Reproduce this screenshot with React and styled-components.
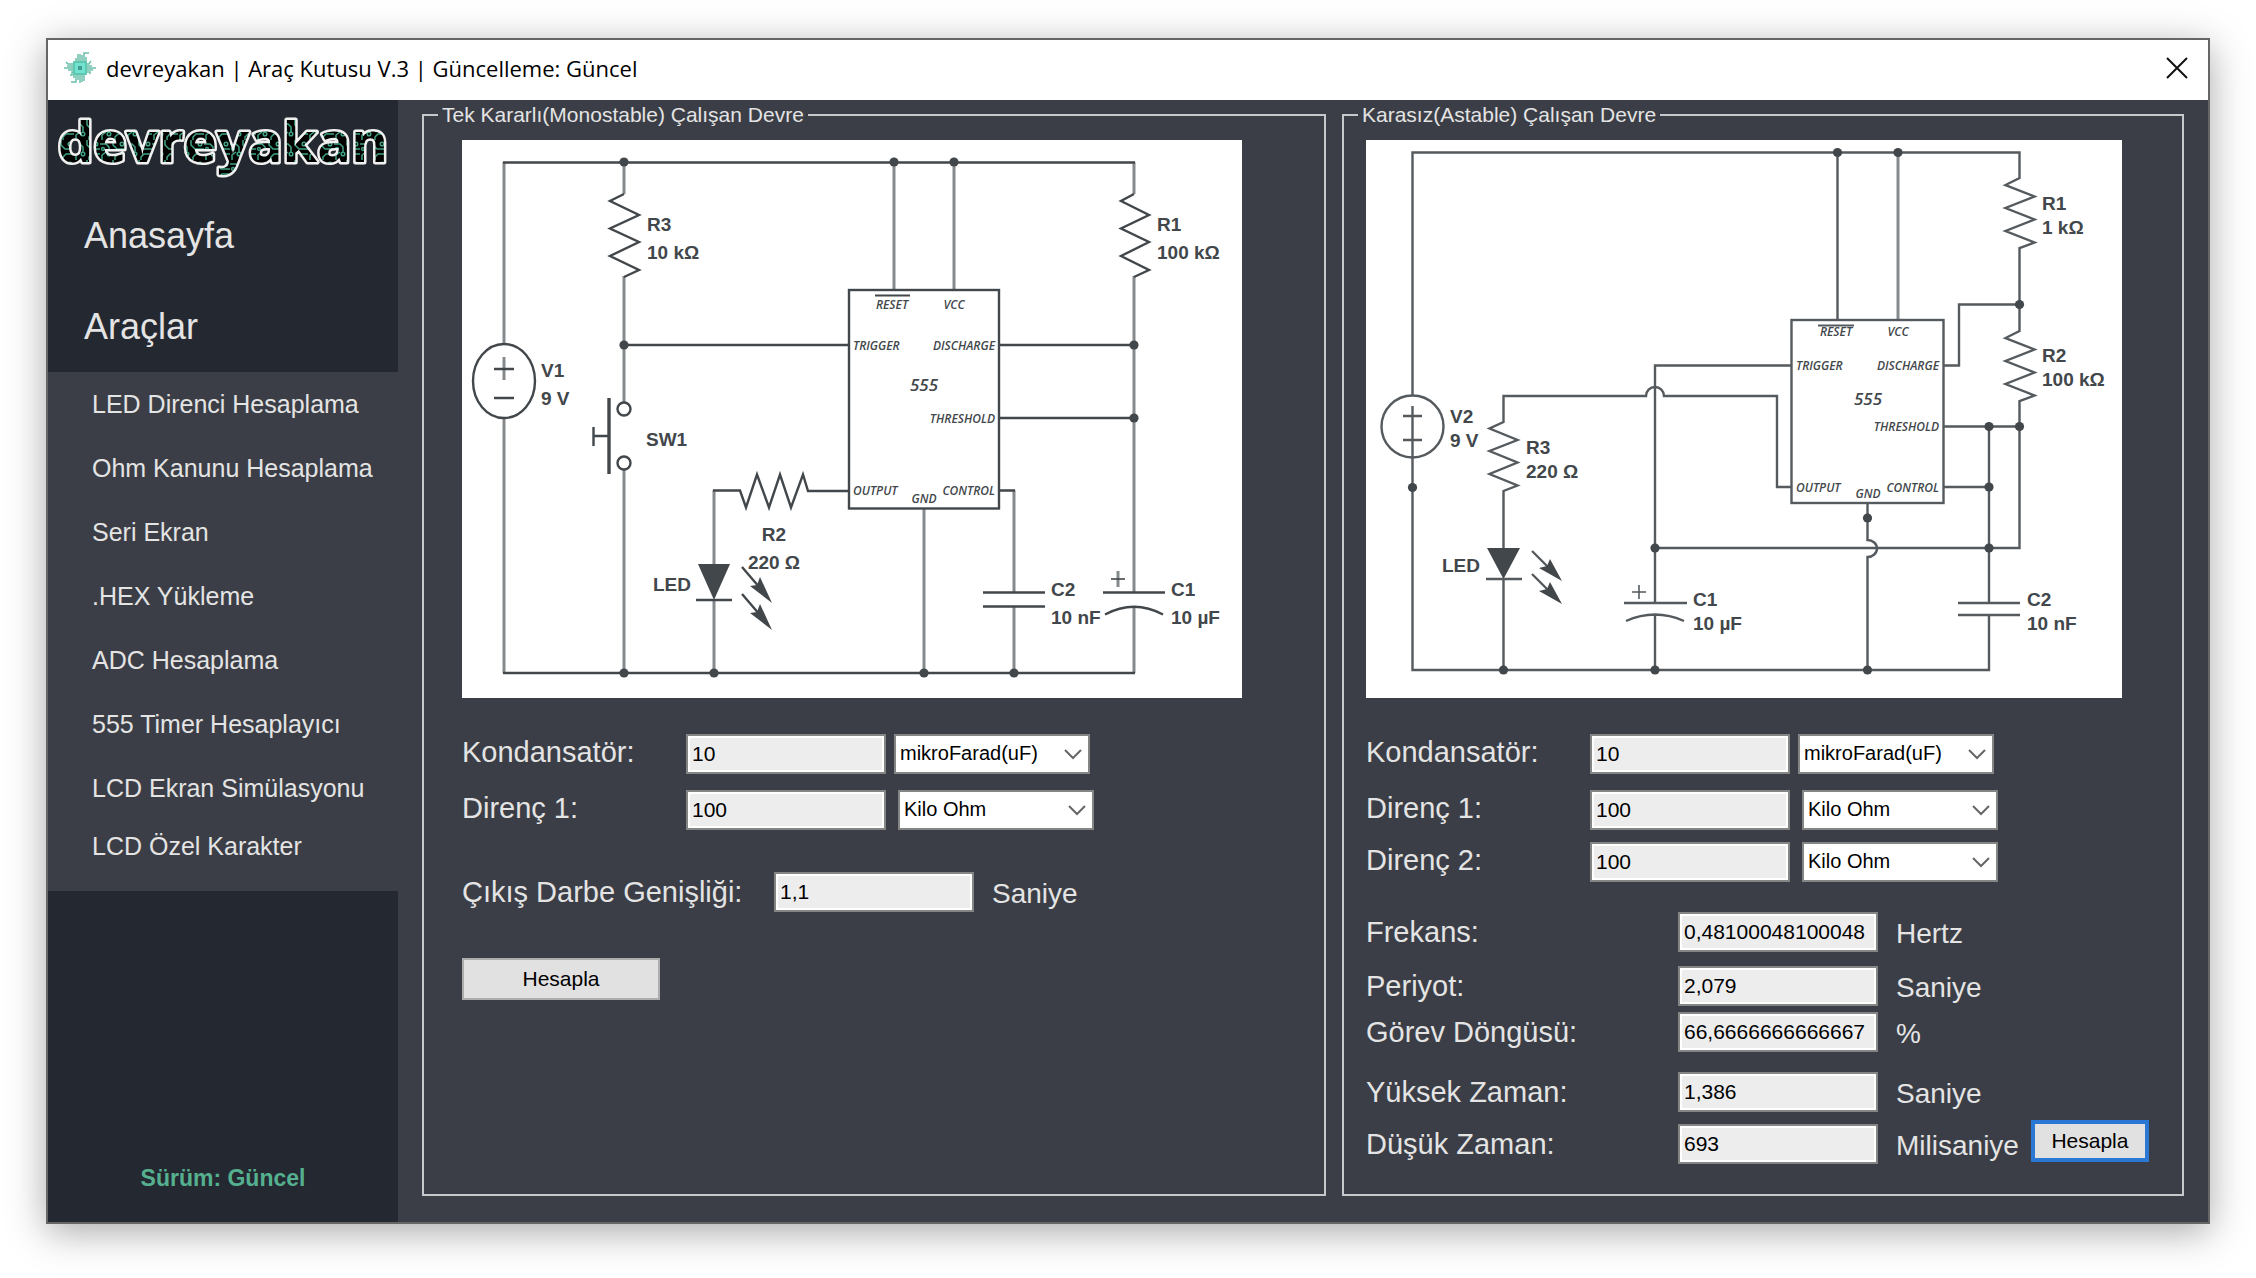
import React from "react";
import styled, { createGlobalStyle, css } from "styled-components";

const color = {
  frame: "#666666",
  surface: "#3b3e46",
  side: "#242830",
  text: "#e4e4e4",
  line: "#c6c8cc",
  accent: "#55b08f",
  wire: "#555a5e",
  soft: "#858a8c",
  ink: "#42474b",
};

const GlobalStyle = createGlobalStyle`
  *, *::before, *::after { box-sizing: border-box; }
  body {
    margin: 0;
    background: #ffffff;
    font-family: "Liberation Sans", Arial, sans-serif;
  }
`;

const Page = styled.div`
  padding: 38px 46px 54px;
`;

const AppWindow = styled.div`
  border: 2px solid ${color.frame};
  background: ${color.surface};
  box-shadow: 0 8px 36px rgba(0, 0, 0, 0.34);
`;

const TitleBar = styled.header`
  display: flex;
  align-items: center;
  gap: 10px;
  height: 60px;
  padding: 0 20px 4px 16px;
  background: #ffffff;
`;

const Title = styled.h1`
  flex: 1;
  margin: 0;
  font: 400 22px/30px "Open Sans", "Noto Sans", sans-serif;
  color: #000000;
`;

const CloseButton = styled.button`
  display: grid;
  place-items: center;
  padding: 0;
  border: 0;
  background: none;
`;

const Body = styled.div`
  display: flex;
`;

const Sidebar = styled.aside`
  display: flex;
  flex-direction: column;
  flex: 0 0 350px;
  background: ${color.side};
`;

const Logo = styled.svg`
  display: block;
  width: 100%;
  height: 90px;
`;

const MainLink = styled.a`
  display: flex;
  align-items: center;
  height: 91px;
  padding-left: 36px;
  font-size: 36px;
  color: ${color.text};
  text-decoration: none;
`;

const ToolMenu = styled.nav`
  display: flex;
  flex-direction: column;
  padding-bottom: 19px;
  background: ${color.surface};
`;

const ToolLink = styled.a`
  display: flex;
  align-items: center;
  height: 64px;
  padding-left: 44px;
  font-size: 25px;
  color: ${color.text};
  text-decoration: none;

  &:last-child {
    height: 52px;
  }
`;

const Version = styled.p`
  margin: auto 0 0;
  padding-bottom: 30px;
  font-size: 23px;
  line-height: 28px;
  font-weight: 700;
  text-align: center;
  color: ${color.accent};
`;

const Content = styled.main`
  display: grid;
  grid-template-columns: minmax(0, 904fr) minmax(0, 842fr);
  flex: 1;
  gap: 16px;
  min-width: 0;
  padding: 3px 24px 26px;
`;

const Group = styled.fieldset`
  min-width: 0;
  margin: 0;
  padding: 13px 22px 30px ${(p) => p.$indent}px;
  border: 2px solid ${color.line};
`;

const Legend = styled.legend`
  margin-left: ${(p) => p.$shift}px;
  padding: 0 4px;
  font-size: 21px;
  line-height: 24px;
  color: ${color.text};
`;

const Circuit = styled.svg`
  display: block;
  max-width: 100%;
  margin-bottom: 36px;
  background: #ffffff;
  font: 700 19px "Liberation Sans", Arial, sans-serif;
  fill: ${color.ink};
`;

const Row = styled.div`
  display: flex;
  align-items: center;
  height: 40px;
  margin-bottom: ${(p) => p.$after || 0}px;
`;

const Label = styled.label`
  flex: 0 0 ${(p) => p.$width}px;
  padding-bottom: ${(p) => (p.$raised ? 4 : 0)}px;
  font-size: 29px;
  line-height: 32px;
  white-space: nowrap;
  color: ${color.text};
`;

const Unit = styled.span`
  padding: 4px 0 0 18px;
  font-size: 28px;
  line-height: 32px;
  color: ${color.text};
`;

const Field = styled.input`
  flex: 0 0 200px;
  width: 200px;
  height: 40px;
  padding: 0 4px;
  border: 2px solid #858585;
  box-shadow: inset 0 0 0 2px #ffffff;
  background: #ededed;
  font: 21px "Liberation Sans", Arial, sans-serif;
  color: #000000;
`;

const SelectBox = styled.span`
  position: relative;
  flex: 0 0 196px;
  height: 40px;
  margin-left: ${(p) => p.$gap}px;

  svg {
    position: absolute;
    top: 14px;
    right: 8px;
    pointer-events: none;
  }
`;

const Select = styled.select`
  appearance: none;
  width: 100%;
  height: 40px;
  padding: 0 30px 2px 4px;
  border: 2px solid #858585;
  border-radius: 0;
  background: #ffffff;
  font: 20px "Liberation Sans", Arial, sans-serif;
  color: #000000;
`;

const Button = styled.button`
  width: ${(p) => p.$width}px;
  height: 42px;
  padding: 0;
  border: 2px solid #adadad;
  background: #e1e1e1;
  font: 21px "Liberation Sans", Arial, sans-serif;
  color: #000000;

  ${(p) =>
    p.$active &&
    css`
      margin: 0 0 6px 12px;
      border: 4px solid #2a78d4;
    `}
`;

function AppIcon() {
  return (
    <svg width="32" height="32" viewBox="0 0 32 32" aria-hidden="true">
      <g fill="none" stroke="#6cc0ab" strokeWidth="1.5">
        <path d="M12 10V6M14 10V2M16 10V2M18 10V3M20 10V1H25M22 10V5" />
        <path d="M12 22v8H7M14 22v6M16 22v9M18 22v8M20 22v7M10 22v4" />
        <path d="M10 12H4L2 10M10 14H3M10 16H0M10 18H4M10 20H8V23H6" />
        <path d="M22 12h3l2-3M22 14h6M22 16h10M22 18h7M22 20h4v2" />
      </g>
      <rect x="9" y="9" width="14" height="14" rx="1" fill="#5cc8b0" />
      <rect x="11" y="11" width="10" height="10" fill="#74e2d2" />
      <rect x="14" y="14" width="4" height="4" fill="#3f9f8c" />
    </svg>
  );
}

function BrandLogo() {
  return (
    <Logo viewBox="0 0 350 90" role="img" aria-label="devreyakan">
      <defs>
        <pattern id="traces" width="26" height="20" patternUnits="userSpaceOnUse">
          <rect width="26" height="20" fill="#000" />
          <g fill="none" stroke="#3fa184" strokeWidth="1.5">
            <path d="M0 4h6l3 3v5M13 0v5l4 4h9M26 14h-8l-3 3v3M2 20v-5l4-3" />
            <circle cx="9" cy="14" r="1.8" />
            <circle cx="22" cy="4" r="1.8" />
            <circle cx="3" cy="9" r="1.4" />
          </g>
        </pattern>
      </defs>
      <text
        x="175"
        y="62"
        textAnchor="middle"
        fontFamily="Open Sans, Noto Sans, sans-serif"
        fontWeight="700"
        fontSize="56"
        fill="url(#traces)"
        stroke="#f0f0f0"
        strokeWidth="5"
        strokeLinejoin="round"
        paintOrder="stroke"
      >
        devreyakan
      </text>
    </Logo>
  );
}

function Dots({ at }) {
  return at.map(([x, y]) => <circle key={`${x}-${y}`} cx={x} cy={y} r="4.6" />);
}

/* Two stacked lines: part name and value. */
function Part({ x, y, step, lines, anchor }) {
  return lines.map((line, i) => (
    <text key={line} x={x} y={y + i * step} textAnchor={anchor}>
      {line}
    </text>
  ));
}

function Pins({ pins }) {
  return (
    <g fontFamily="Open Sans, Noto Sans, sans-serif" fontStyle="italic" fontWeight="600" fontSize="12">
      {pins.map(([name, x, y, anchor, size]) => (
        <text key={name} x={x} y={y} textAnchor={anchor} fontSize={size}>
          {name}
        </text>
      ))}
    </g>
  );
}

function MonostableCircuit() {
  return (
    <Circuit width="780" height="558" viewBox="0 0 780 558" role="img" aria-label="Monostable 555">
      <g fill="none" stroke={color.soft} strokeWidth="3">
        <path d="M42 22V205M42 278V533M162 22V54M162 136V262M162 330V533M252 350V424M252 460V533" />
        <path d="M432 22V150M492 22V150M672 22V54M672 136V452M672 467V533M462 369V533M552 350V452M552 467V533" />
        <path d="M42 217V240" />
        <path d="M656 431V447" />
      </g>
      <g fill="none" stroke={color.ink} strokeWidth="2.4">
        <path d="M41 22.500H673M41 533H673M162 205H387M538 205H672M538 278H672" />
        <path d="M162 54l-14 7 29 14-29 13.500 29 13.500-29 14 29 14-15 7" />
        <path d="M672 54l-13 7 28 14-28 13.500 28 13.500-28 14 28 14-15 7" />
        <ellipse cx="42" cy="241" rx="31" ry="37" />
        <path d="M32 229H52M32 258H52" />
        <circle cx="162" cy="269" r="6.500" />
        <circle cx="162" cy="323" r="6.500" />
        <path d="M131.500 287V306M131.500 296H147" />
        <path d="M147 258V334" strokeWidth="3.400" />
        <path d="M251 350.500H278l6 17 11-33 12 33 11-33 11 33 12-33 5 16.500H387" />
        <path d="M234 460H270M280 427L298 448M280 454L298 475" />
        <rect x="387" y="150" width="150" height="218.500" />
        <path d="M538 350.500H553M521 452.500H583M521 466.500H583M641 452.500H703M643 474.500Q672 459 701 474.500" />
        <path d="M413 155.500H448" strokeWidth="1.800" />
        <path d="M649 439H663" strokeWidth="1.600" />
      </g>
      <path d="M236 424H268L252 460ZM310 463L288 446 295 445 298 437ZM310 490L288 473 295 472 298 464Z" />
      <Dots at={[[162, 22], [162, 205], [162, 533], [252, 533], [432, 22], [492, 22], [462, 533], [552, 533], [672, 205], [672, 278]]} />
      <Part x={185} y={91} step={28} lines={["R3", "10 kΩ"]} />
      <Part x={695} y={91} step={28} lines={["R1", "100 kΩ"]} />
      <Part x={79} y={237} step={28} lines={["V1", "9 V"]} />
      <Part x={184} y={306} step={28} lines={["SW1"]} />
      <Part x={312} y={401} step={28} lines={["R2", "220 Ω"]} anchor="middle" />
      <Part x={191} y={451} step={28} lines={["LED"]} />
      <Part x={589} y={456} step={28} lines={["C2", "10 nF"]} />
      <Part x={709} y={456} step={28} lines={["C1", "10 µF"]} />
      <Pins
        pins={[
          ["RESET", 430, 169, "middle"],
          ["VCC", 492, 169, "middle"],
          ["TRIGGER", 391, 210],
          ["DISCHARGE", 533, 210, "end"],
          ["555", 462, 251, "middle", 17],
          ["THRESHOLD", 533, 283, "end"],
          ["OUTPUT", 391, 355],
          ["GND", 462, 363, "middle"],
          ["CONTROL", 533, 355, "end"],
        ]}
      />
    </Circuit>
  );
}

function AstableCircuit() {
  return (
    <Circuit width="756" height="558" viewBox="0 0 756 558" role="img" aria-label="Astable 555">
      <g fill="none" stroke={color.wire} strokeWidth="2.4">
        <path d="M46.500 256V12.500H653.500V38l-14 7 29 11.500-29 11.500 29 11.500-29 11.500 29 11.500-15 5.500V191l-14 7 29 11.500-29 11.500 29 11.500-29 11.500 29 11.500-15 5.500V408H289" />
        <path d="M46.500 266V530H623V475M623 463V286.500M577 286.500H653M577 347H623" />
        <circle cx="46.500" cy="286.500" r="31" />
        <path d="M37 276H56M37 300H56" />
        <path d="M425 347H411V256H298A9 9 0 0 0 280 256H137.500V282l-14 6.500 28 11.500-28 11 28 11.500-28 11.500 28 11.500-14 5.500V408M137.500 439V530" />
        <path d="M120 439H156M166 411L186 431M166 434L186 454" />
        <path d="M425 225.500H289V463M289 475V530M258 463H321M260 481Q289 468 318 481" />
        <path d="M471.500 12V180M577 225.500H593V164.500H653" />
        <path d="M532 12V180" stroke={color.soft} strokeWidth="3" />
        <rect x="425.500" y="180" width="152" height="183" />
        <path d="M501.500 363V400A9.500 8.500 0 0 1 501.500 417V530" />
        <path d="M592 463H654M592 475H654" />
        <path d="M452 185.500H488" strokeWidth="1.800" />
        <path d="M266 452H280M273 445V459" strokeWidth="1.600" />
      </g>
      <path d="M121 408H154L137.500 439ZM196 441L173 428 181 426 184 419ZM196 464L173 451 181 449 184 442Z" />
      <Dots
        at={[
          [46.5, 347.5], [137.5, 530], [289, 408], [289, 530], [471.5, 12.5], [532, 12.5], [653.5, 164.5],
          [653.5, 286.5], [623, 286.5], [623, 347], [623, 408], [501.5, 378], [501.5, 530],
        ]}
      />
      <Part x={676} y={70} step={24} lines={["R1", "1 kΩ"]} />
      <Part x={676} y={222} step={24} lines={["R2", "100 kΩ"]} />
      <Part x={84} y={283} step={24} lines={["V2", "9 V"]} />
      <Part x={160} y={314} step={24} lines={["R3", "220 Ω"]} />
      <Part x={76} y={432} step={24} lines={["LED"]} />
      <Part x={327} y={466} step={24} lines={["C1", "10 µF"]} />
      <Part x={661} y={466} step={24} lines={["C2", "10 nF"]} />
      <Pins
        pins={[
          ["RESET", 470, 196, "middle"],
          ["VCC", 532, 196, "middle"],
          ["TRIGGER", 430, 230],
          ["DISCHARGE", 573, 230, "end"],
          ["555", 502, 265, "middle", 17],
          ["THRESHOLD", 573, 291, "end"],
          ["OUTPUT", 430, 352],
          ["GND", 502, 358, "middle"],
          ["CONTROL", 573, 352, "end"],
        ]}
      />
    </Circuit>
  );
}

function InputRow({ id, label, width, value, units, gap, after }) {
  return (
    <Row $after={after}>
      <Label htmlFor={id} $width={width} $raised>{label}</Label>
      <Field id={id} type="text" defaultValue={value} />
      <SelectBox $gap={gap}>
        <Select aria-label={`${label} birim`}>
          {units.map((u) => (
            <option key={u}>{u}</option>
          ))}
        </Select>
        <svg width="18" height="12" viewBox="0 0 18 12" aria-hidden="true">
          <path d="M1 2l8 8 8-8" fill="none" stroke="#666" strokeWidth="2" />
        </svg>
      </SelectBox>
    </Row>
  );
}

function ResultRow({ id, label, width, value, unit, after, children }) {
  return (
    <Row $after={after}>
      <Label htmlFor={id} $width={width}>{label}</Label>
      <Field id={id} type="text" defaultValue={value} readOnly />
      <Unit>{unit}</Unit>
      {children}
    </Row>
  );
}

const tools = [
  "LED Direnci Hesaplama",
  "Ohm Kanunu Hesaplama",
  "Seri Ekran",
  ".HEX Yükleme",
  "ADC Hesaplama",
  "555 Timer Hesaplayıcı",
  "LCD Ekran Simülasyonu",
  "LCD Özel Karakter",
];

const farads = ["mikroFarad(uF)"];
const ohms = ["Kilo Ohm"];

export default function App() {
  return (
    <Page>
      <GlobalStyle />
      <AppWindow>
        <TitleBar>
          <AppIcon />
          <Title>devreyakan | Araç Kutusu V.3 | Güncelleme: Güncel</Title>
          <CloseButton type="button" aria-label="Kapat">
            <svg width="22" height="22" viewBox="0 0 22 22" aria-hidden="true">
              <path d="M1 1l20 20M21 1L1 21" stroke="#111" strokeWidth="2" />
            </svg>
          </CloseButton>
        </TitleBar>
        <Body>
          <Sidebar>
            <BrandLogo />
            <MainLink href="#anasayfa">Anasayfa</MainLink>
            <MainLink href="#araclar">Araçlar</MainLink>
            <ToolMenu>
              {tools.map((tool) => (
                <ToolLink key={tool} href="#arac">{tool}</ToolLink>
              ))}
            </ToolMenu>
            <Version>Sürüm: Güncel</Version>
          </Sidebar>
          <Content>
            <Group $indent={38}>
              <Legend $shift={-24}>Tek Kararlı(Monostable) Çalışan Devre</Legend>
              <MonostableCircuit />
              <InputRow id="m-c" label="Kondansatör:" width={224} value="10" units={farads} gap={8} after={16} />
              <InputRow id="m-r" label="Direnç 1:" width={224} value="100" units={ohms} gap={12} after={42} />
              <ResultRow id="m-t" label="Çıkış Darbe Genişliği:" width={312} value="1,1" unit="Saniye" after={46} />
              <Button type="button" $width={198}>Hesapla</Button>
            </Group>
            <Group $indent={22}>
              <Legend $shift={-8}>Karasız(Astable) Çalışan Devre</Legend>
              <AstableCircuit />
              <InputRow id="a-c" label="Kondansatör:" width={224} value="10" units={farads} gap={8} after={16} />
              <InputRow id="a-r1" label="Direnç 1:" width={224} value="100" units={ohms} gap={12} after={12} />
              <InputRow id="a-r2" label="Direnç 2:" width={224} value="100" units={ohms} gap={12} after={30} />
              <ResultRow id="a-f" label="Frekans:" width={312} value="0,48100048100048" unit="Hertz" after={14} />
              <ResultRow id="a-p" label="Periyot:" width={312} value="2,079" unit="Saniye" after={6} />
              <ResultRow id="a-d" label="Görev Döngüsü:" width={312} value="66,6666666666667" unit="%" after={20} />
              <ResultRow id="a-h" label="Yüksek Zaman:" width={312} value="1,386" unit="Saniye" after={12} />
              <ResultRow id="a-l" label="Düşük Zaman:" width={312} value="693" unit="Milisaniye">
                <Button type="button" $width={118} $active>Hesapla</Button>
              </ResultRow>
            </Group>
          </Content>
        </Body>
      </AppWindow>
    </Page>
  );
}
